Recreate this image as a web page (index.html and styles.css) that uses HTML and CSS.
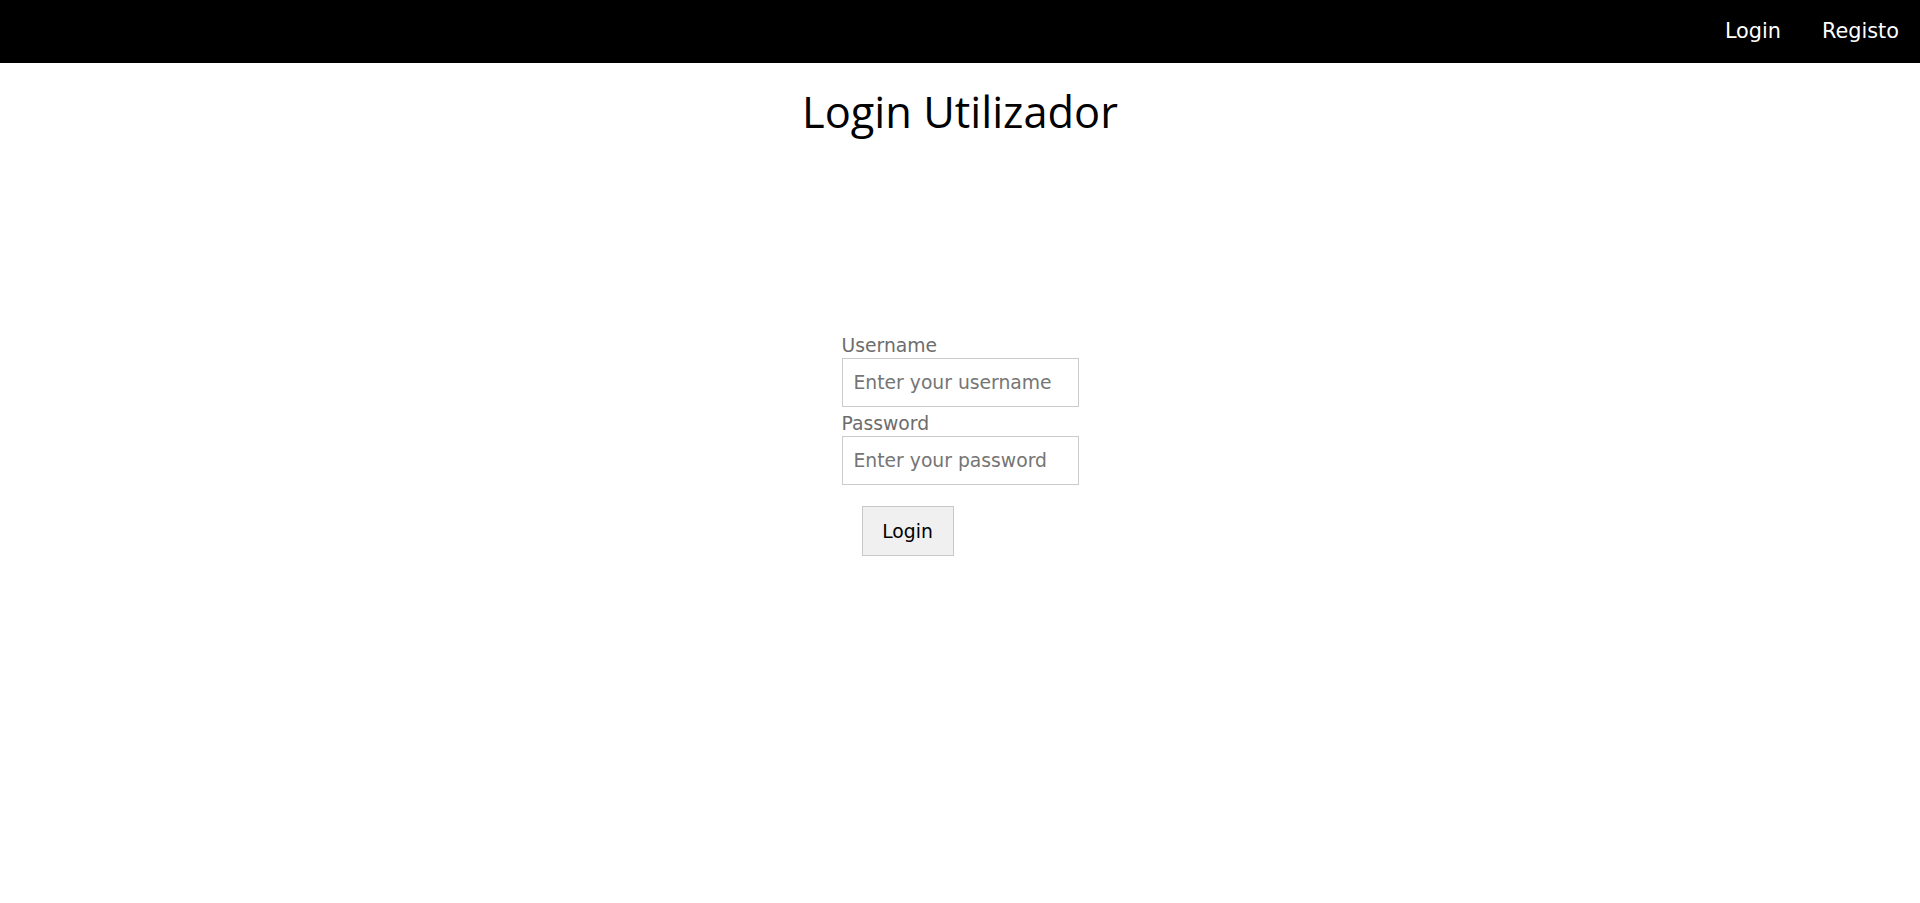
FILE: index.html
```html
<!DOCTYPE html>
<html lang="pt">
<head>
<meta charset="utf-8">
<title>Login Utilizador</title>
<link rel="stylesheet" href="styles.css">
</head>
<body>
<nav class="topnav">
  <a class="navlink" href="#">Login</a>
  <a class="navlink" href="#">Registo</a>
</nav>
<main class="page">
  <h1 class="title">Login Utilizador</h1>
  <form class="login-form">
    <label class="field-label" for="username">Username</label>
    <input class="field-input" id="username" type="text" placeholder="Enter your username">
    <label class="field-label second" for="password">Password</label>
    <input class="field-input" id="password" type="password" placeholder="Enter your password">
    <button class="login-btn" type="button">Login</button>
  </form>
</main>
</body>
</html>
```
FILE: styles.css
```css
html, body {
  margin: 0;
  padding: 0;
  background: #fff;
}

body {
  font-family: "DejaVu Sans", Verdana, sans-serif;
}

.topnav {
  height: 63px;
  background: #000;
  display: flex;
  justify-content: flex-end;
  align-items: center;
  gap: 41px;
  padding-right: 21px;
}

.navlink {
  color: #fff;
  text-decoration: none;
  font-size: 20.8px;
  line-height: 24px;
  margin-top: -2px;
}

.page {
  display: flex;
  flex-direction: column;
  align-items: center;
}

.title {
  font-family: "Open Sans", "Noto Sans", sans-serif;
  font-weight: 400;
  font-size: 43.4px;
  line-height: 54px;
  margin: 22px 0 0;
  color: #000;
}

.login-form {
  display: flex;
  flex-direction: column;
  align-items: flex-start;
  width: 237px;
  margin-top: 196px;
}

.field-label {
  font-size: 18.75px;
  line-height: 22px;
  color: #6d6d6d;
  margin-bottom: 1px;
}

.field-label.second {
  margin-top: 6px;
}

.field-input {
  box-sizing: border-box;
  width: 237px;
  height: 49px;
  border: 1px solid #cbcbcb;
  padding: 0 11px;
  font-family: "DejaVu Sans", Verdana, sans-serif;
  font-size: 18.75px;
  color: #333;
  outline: none;
  background: #fff;
}

.field-input::placeholder {
  color: #757575;
}

.login-btn {
  box-sizing: border-box;
  margin: 21px 0 0 20px;
  width: 92px;
  height: 50px;
  background: #f0f0f0;
  border: 1px solid #c8c8c8;
  font-family: "DejaVu Sans", Verdana, sans-serif;
  font-size: 18.75px;
  color: #000;
  padding: 0;
  cursor: pointer;
}
```
